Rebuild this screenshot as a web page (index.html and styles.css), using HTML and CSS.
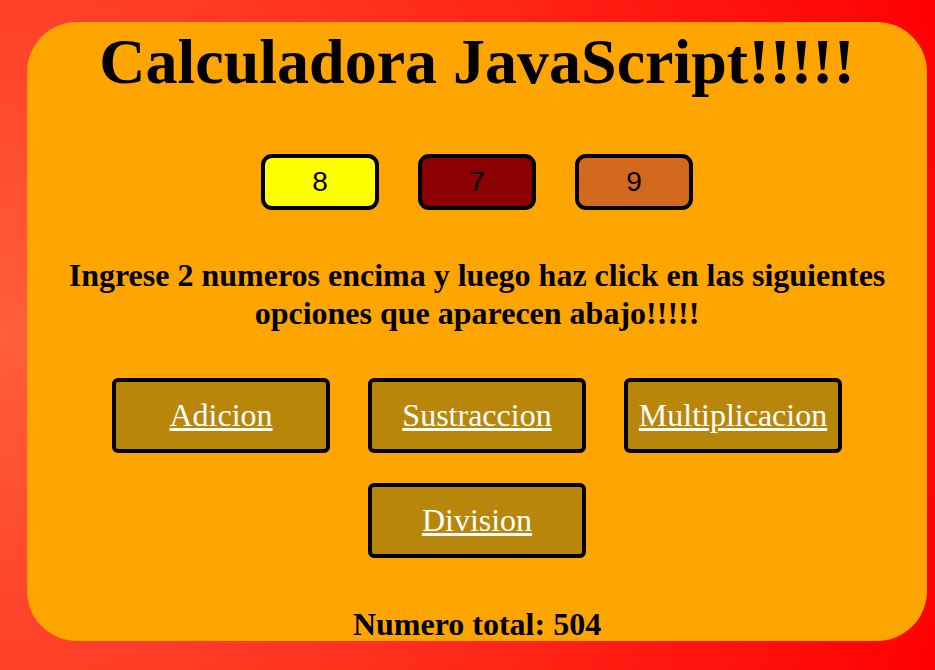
FILE: index.html
```html
<!DOCTYPE html>
<html lang="es">
<head>
<meta charset="utf-8">
<title>Calculadora JavaScript</title>
<link rel="stylesheet" href="styles.css">
</head>
<body>
<main class="calc">
  <h1 class="title">Calculadora JavaScript!!!!!</h1>
  <div class="inputs">
    <input class="num num-a" type="text" value="8">
    <input class="num num-b" type="text" value="7">
    <input class="num num-c" type="text" value="9">
  </div>
  <p class="hint">Ingrese 2 numeros encima y luego haz click en las siguientes opciones que aparecen abajo!!!!!</p>
  <div class="ops">
    <button class="op" type="button">Adicion</button>
    <button class="op" type="button">Sustraccion</button>
    <button class="op" type="button">Multiplicacion</button>
    <button class="op" type="button">Division</button>
  </div>
  <p class="total">Numero total: 504</p>
</main>
</body>
</html>
```

FILE: styles.css
```css
html, body {
  height: 100%;
}
body {
  margin: 0;
  background: radial-gradient(circle farthest-corner at 0% 50%, #ff5f3c 0%, #ff0000 100%);
  font-family: "Liberation Serif", "Times New Roman", serif;
  overflow: hidden;
}
.calc {
  box-sizing: border-box;
  width: 900px;
  height: 619px;
  margin: 22px 0 0 27px;
  background: #ffa500;
  border-radius: 50px;
  display: flex;
  flex-direction: column;
  align-items: center;
}
.title {
  margin: 4px 0 0;
  font-size: 64px;
  line-height: 72px;
  font-weight: bold;
}
.inputs {
  display: flex;
  gap: 39px;
  margin-top: 56px;
}
.num {
  box-sizing: border-box;
  width: 118px;
  height: 56px;
  border: 4px solid #000;
  border-radius: 11px;
  font-family: "Liberation Sans", Arial, sans-serif;
  font-size: 28px;
  text-align: center;
  color: #000;
  padding: 0;
}
.num-a { background: #ffff00; }
.num-b { background: #8b0000; }
.num-c { background: #d2691e; }
.hint {
  margin: 46px 30px 0;
  font-size: 32px;
  line-height: 38px;
  font-weight: bold;
  text-align: center;
}
.ops {
  display: flex;
  flex-wrap: wrap;
  justify-content: center;
  width: 730px;
  column-gap: 38px;
  row-gap: 30px;
  margin-top: 46px;
}
.op {
  box-sizing: border-box;
  width: 218px;
  height: 75px;
  background: #b8860b;
  border: 4px solid #000;
  border-radius: 6px;
  color: #fff;
  font-family: "Liberation Serif", "Times New Roman", serif;
  font-size: 32px;
  text-decoration: underline;
  padding: 0;
}
.total {
  margin: 48px 0 0;
  font-size: 32px;
  line-height: 37px;
  font-weight: bold;
}
```
